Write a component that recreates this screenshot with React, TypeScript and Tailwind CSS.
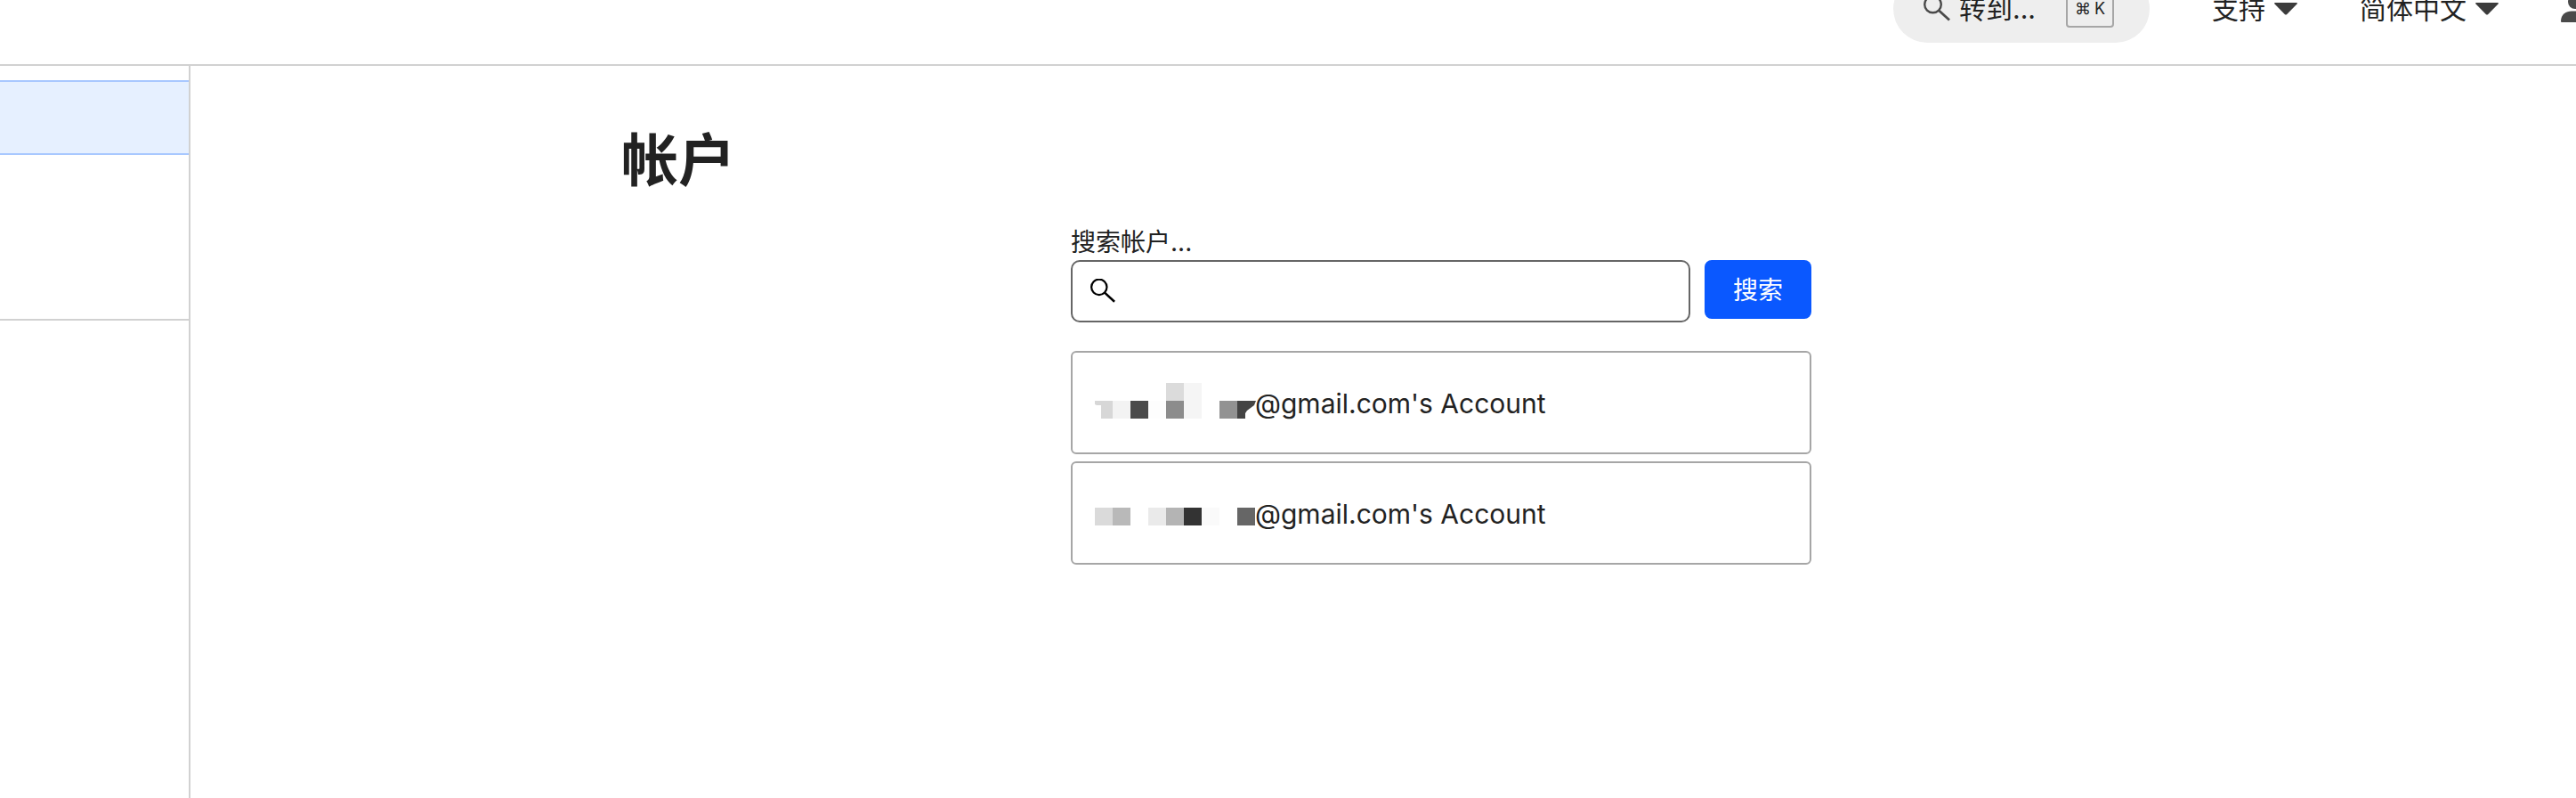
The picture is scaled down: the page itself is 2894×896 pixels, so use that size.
import React, { useState } from 'react';

type Cell = { x: number; y: number; fill: string };

type Account = {
  id: number;
  name: string;
  mask: Cell[];
  edge?: boolean;
};

const accounts: Account[] = [
  {
    id: 1,
    name: "@gmail.com's Account",
    edge: true,
    mask: [
      { x: 80, y: 0, fill: '#dbdbdb' },
      { x: 100, y: 0, fill: '#f5f5f5' },
      { x: 20, y: 20, fill: '#f3f3f3' },
      { x: 40, y: 20, fill: '#4a4a4a' },
      { x: 60, y: 20, fill: '#fdfdfd' },
      { x: 80, y: 20, fill: '#8c8c8c' },
      { x: 100, y: 20, fill: '#f5f5f5' },
      { x: 140, y: 20, fill: '#929292' },
    ],
  },
  {
    id: 2,
    name: "@gmail.com's Account",
    mask: [
      { x: 0, y: 16, fill: '#dadada' },
      { x: 20, y: 16, fill: '#b9b9b9' },
      { x: 60, y: 16, fill: '#eaeaea' },
      { x: 80, y: 16, fill: '#b4b4b4' },
      { x: 100, y: 16, fill: '#333333' },
      { x: 120, y: 16, fill: '#fafafa' },
      { x: 160, y: 16, fill: '#666666' },
    ],
  },
];

const SearchIcon = ({ className }: { className: string }) => (
  <svg viewBox="0 0 30 30" fill="none" stroke="currentColor" strokeWidth="2.4" className={className} aria-hidden="true">
    <circle cx="10.5" cy="10" r="9.3" />
    <path d="M17.500 17 L29 27.500" strokeWidth="2.8" />
  </svg>
);

const Caret = () => (
  <svg viewBox="0 0 26 14" className="w-[26px] h-[14px] text-[#3c3c3c]" aria-hidden="true">
    <path d="M1 0 H25 Q26.500 .4 25.500 1.500 L14 13.200 Q13 14 12 13.200 L.5 1.500 Q-.5 .4 1 0 Z" fill="currentColor" />
  </svg>
);

const MenuButton = ({ label }: { label: string }) => (
  <button className="flex items-center gap-[10px] h-[76px] shrink-0 text-[30px] leading-[40px]">
    {label}
    <Caret />
  </button>
);

const Header = () => (
  <header className="h-[74px] border-b-2 border-[#d1d1d1] pb-6 flex items-end justify-end gap-[70px] overflow-hidden">
    <button className="flex items-center h-[76px] w-[288px] shrink-0 pl-[34px] pr-10 rounded-full bg-[#eeeeee] text-[30px] leading-[40px]">
      <SearchIcon className="w-[30px] h-[30px] text-[#4a4a4a]" />
      <span className="ml-[10px]">转到...</span>
      <kbd className="ml-auto w-[54px] h-[42px] flex items-center justify-center gap-1 border-2 border-[#a6a6a6] rounded font-[inherit] text-[18px]">
        <span>⌘</span>
        <span>K</span>
      </kbd>
    </button>
    <MenuButton label="支持" />
    <MenuButton label="简体中文" />
    <button aria-label="用户" className="flex items-center h-[76px] w-8 -mr-[15px] shrink-0">
      <svg viewBox="0 0 32 32" className="w-8 h-8 text-[#4a4a4a]" aria-hidden="true">
        <circle cx="16" cy="8" r="8" fill="currentColor" />
        <path d="M0 30 C0 22 6 18.500 12 18.500 H20 C26 18.500 32 22 32 30 Q32 31 31 31 H1 Q0 31 0 30 Z" fill="currentColor" />
      </svg>
    </button>
  </header>
);

const AccountItem = ({ account }: { account: Account }) => (
  <li>
    <a href="#" className="flex items-center h-[116px] pl-[25px] border-2 border-[#a6a6a6] rounded-md text-[30px] leading-[40px]">
      <svg viewBox="0 0 180 44" className="w-[180px] h-11 shrink-0 overflow-visible" aria-hidden="true">
        {account.mask.map((cell) => (
          <rect key={`${cell.x}-${cell.y}`} x={cell.x} y={cell.y} width="20" height="20" fill={cell.fill} />
        ))}
        {account.edge && (
          <>
            <path d="M0 20 H20 V40 H7 V25 H2 L0 24 Z" fill="#d7d7d7" />
            <path d="M160 20 H181 L179 25 L171 31 L169 34 V40 H160 Z" fill="#444444" />
          </>
        )}
      </svg>
      <span className="pt-[2px]">{account.name}</span>
    </a>
  </li>
);

const App = () => {
  const [query, setQuery] = useState('');

  return (
    <div className="min-h-screen flex flex-col bg-white text-[#222222] font-['Inter','Noto_Sans_CJK_SC',sans-serif]">
      <Header />
      <div className="flex flex-1">
        <aside className="w-[214px] shrink-0 pt-4 border-r-2 border-[#d1d1d1]">
          <div className="h-[84px] bg-[#e6f0ff] border-y-2 border-[#a8c8ff]" />
          <div className="h-[186px] border-b-2 border-[#d1d1d1]" />
        </aside>
        <main className="flex-1 pt-[66px] pl-[484px] pr-[354px]">
          <h1 className="mb-8 text-[64px] leading-[80px] font-semibold">帐户</h1>
          <div className="max-w-[832px] mx-auto">
            <form onSubmit={(e) => e.preventDefault()}>
              <label htmlFor="account-search" className="block text-[28px] leading-[40px]">
                搜索帐户...
              </label>
              <div className="flex items-start gap-4">
                <div className="flex flex-1 items-center h-[70px] px-5 gap-3 border-2 border-[#666666] rounded-[10px]">
                  <SearchIcon className="w-[28px] h-[28px] shrink-0 text-black" />
                  <input
                    id="account-search"
                    type="text"
                    className="flex-1 min-w-0 text-[28px] outline-none"
                    value={query}
                    onChange={(e) => setQuery(e.target.value)}
                  />
                </div>
                <button type="submit" className="w-[120px] h-[66px] pt-[2px] rounded-lg bg-[#0a58ff] text-white text-[28px]">
                  搜索
                </button>
              </div>
            </form>
            <ul className="mt-8 flex flex-col gap-2">
              {accounts.map((account) => (
                <AccountItem key={account.id} account={account} />
              ))}
            </ul>
          </div>
        </main>
      </div>
    </div>
  );
};

export default App;
